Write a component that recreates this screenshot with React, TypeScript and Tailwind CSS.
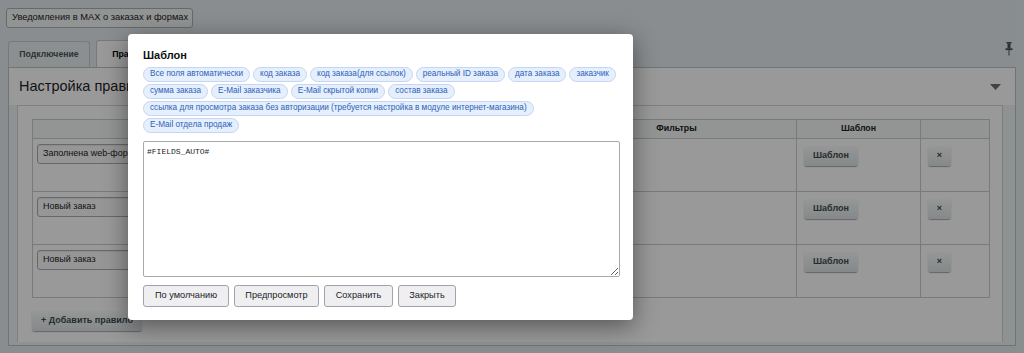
import { ChevronDown } from 'lucide-react';

const tags = [
  'Все поля автоматически',
  'код заказа',
  'код заказа(для ссылок)',
  'реальный ID заказа',
  'дата заказа',
  'заказчик',
  'сумма заказа',
  'E-Mail заказчика',
  'E-Mail скрытой копии',
  'состав заказа',
  'ссылка для просмотра заказа без авторизации (требуется настройка в модуле интернет-магазина)',
  'E-Mail отдела продаж',
];

const rules = ['Заполнена web-форма', 'Новый заказ', 'Новый заказ'];

function GrayButton({ children, className = '' }: { children: React.ReactNode; className?: string }) {
  return (
    <button
      className={`flex h-[21px] items-center justify-center whitespace-nowrap rounded-[3px] bg-gradient-to-b from-[#fbfcfc] to-[#dfe5e6] text-[9px] font-bold text-[#3f4b4e] shadow-[0_1px_1px_rgba(0,0,0,0.35),inset_0_1px_0_#fff] ${className}`}
    >
      {children}
    </button>
  );
}

function PinIcon() {
  return (
    <svg width="8" height="14" viewBox="0 0 8 14" className="text-[#4a5052]">
      <rect x="1.5" y="0" width="5" height="1.6" fill="currentColor" />
      <rect x="2.5" y="1.5" width="3" height="5" fill="currentColor" />
      <rect x="0.5" y="6.3" width="7" height="1.8" fill="currentColor" />
      <rect x="3.5" y="8" width="1" height="5.5" fill="currentColor" />
    </svg>
  );
}

function Page() {
  return (
    <div className="flex h-full flex-col pl-[6px] pt-[8px]">
      <div className="flex h-[20px] w-[187px] items-center justify-between whitespace-nowrap rounded-[3px] border border-[#a9b1b3] bg-[#f4f7f7] pl-[5px] pr-[4px] text-[9.3px] text-[#1b1b1b]">
        <span>Уведомления в MAX о заказах и формах</span>
        <ChevronDown size={10} strokeWidth={2.5} className="text-[#333]" />
      </div>

      <div className="ml-[2px] mt-[12px] flex items-end justify-between pr-[8px]">
        <div className="flex items-end gap-[6px]">
          <div className="flex h-[26px] w-[82px] items-center justify-center rounded-t-[3px] border border-b-0 border-[#c3cccd] bg-[#e8eff0] text-[8.7px] font-bold text-[#4b5557]">
            Подключение
          </div>
          <div className="-mb-px flex h-[28px] w-[70px] items-center justify-center rounded-t-[3px] border border-b-0 border-[#c3cccd] bg-white text-[8.7px] font-bold text-[#000]">
            Правила
          </div>
        </div>
        <div className="mb-[11px] mr-[3px]">
          <PinIcon />
        </div>
      </div>

      <div className="ml-[2px] flex h-[279px] w-[1008px] flex-col border border-[#b9c1c2] bg-[#eef3f3]">
        <div className="flex h-[37px] items-center justify-between bg-white pl-[10px] pr-[14px]">
          <span className="text-[14.5px] text-[#1f1f1f]">Настройка правил</span>
          <svg width="11" height="6" viewBox="0 0 11 6">
            <path d="M0 0h11L5.5 6z" fill="#6b6f70" />
          </svg>
        </div>
        <div className="mb-[3px] ml-[8px] mr-[12px] flex flex-1 flex-col border border-b-0 border-[#cfd5d6] bg-white pl-[14px] pr-[13px] pt-[13px]">
          <table className="w-[957px] table-fixed border-collapse text-[9px] text-[#222]">
            <colgroup>
              <col className="w-[298px]" />
              <col className="w-[226px]" />
              <col className="w-[240px]" />
              <col className="w-[124px]" />
              <col className="w-[69px]" />
            </colgroup>
            <thead>
              <tr className="h-[19px] bg-[#f6f7f7] text-[8.8px] font-bold">
                <th className="border border-[#c9cdcd]"></th>
                <th className="border border-[#c9cdcd]"></th>
                <th className="border border-[#c9cdcd]">Фильтры</th>
                <th className="border border-[#c9cdcd]">Шаблон</th>
                <th className="border border-[#c9cdcd]"></th>
              </tr>
            </thead>
            <tbody>
              {rules.map((r, i) => (
                <tr key={i} className="h-[53px]">
                  <td className="border border-[#c9cdcd] px-[4px] pt-[5px] align-top">
                    <div className="flex h-[20px] w-[230px] items-center rounded-[3px] border border-[#a8b0b2] bg-[#fafbfb] pl-[5px] shadow-[inset_0_1px_1px_rgba(0,0,0,0.08)]">
                      {r}
                    </div>
                  </td>
                  <td className="border border-[#c9cdcd]"></td>
                  <td className="border border-[#c9cdcd]"></td>
                  <td className="border border-[#c9cdcd] pl-[7px] pt-[6px] align-top">
                    <GrayButton className="w-[54px]">Шаблон</GrayButton>
                  </td>
                  <td className="border border-[#c9cdcd] pl-[7px] pt-[6px] align-top">
                    <GrayButton className="w-[23px] text-[8px]">×</GrayButton>
                  </td>
                </tr>
              ))}
            </tbody>
          </table>
          <GrayButton className="mt-[12px] w-[110px] text-[8.4px]">+ Добавить правило</GrayButton>
        </div>
      </div>
    </div>
  );
}

function Modal() {
  return (
    <div className="absolute left-[128px] top-[34px] flex h-[286px] w-[505px] flex-col rounded-[4px] bg-white pl-[15px] pr-[13px] pt-[12px] shadow-[0_6px_24px_rgba(0,0,0,0.45)]">
      <div className="h-[18px] text-[11px] font-bold leading-[18px] text-[#111]">Шаблон</div>
      <div className="mt-[3px] flex flex-wrap gap-x-[3px] gap-y-[2px]">
        {tags.map((t) => (
          <span
            key={t}
            className="flex h-[15px] items-center whitespace-nowrap rounded-full border border-[#c4d6f2] bg-[#e6effd] px-[6px] text-[8.2px] text-[#2d61b8]"
          >
            {t}
          </span>
        ))}
      </div>
      <textarea
        readOnly
        defaultValue="#FIELDS_AUTO#"
        className="mt-[8px] h-[136px] w-[477px] rounded-[2px] border border-[#a9a9a9] px-[3px] pt-[4px] font-['Liberation_Mono',monospace] text-[8px] text-[#222] outline-none"
      />
      <div className="mt-[8px] flex gap-[5px] text-[9.2px] text-[#222]">
        {[
          ['По умолчанию', 'w-[86px]'],
          ['Предпросмотр', 'w-[85px]'],
          ['Сохранить', 'w-[69px]'],
          ['Закрыть', 'w-[58px]'],
        ].map(([label, w]) => (
          <button
            key={label}
            className={`h-[22px] ${w} rounded-[3px] border border-[#a2a2ad] bg-[#efeff2]`}
          >
            {label}
          </button>
        ))}
      </div>
    </div>
  );
}

export default function App() {
  return (
    <div className="relative h-[353px] w-[1024px] overflow-hidden bg-[#e4ecee] font-['Liberation_Sans',Arial,sans-serif]">
      <Page />
      <div className="absolute inset-0 bg-black/40" />
      <Modal />
    </div>
  );
}
